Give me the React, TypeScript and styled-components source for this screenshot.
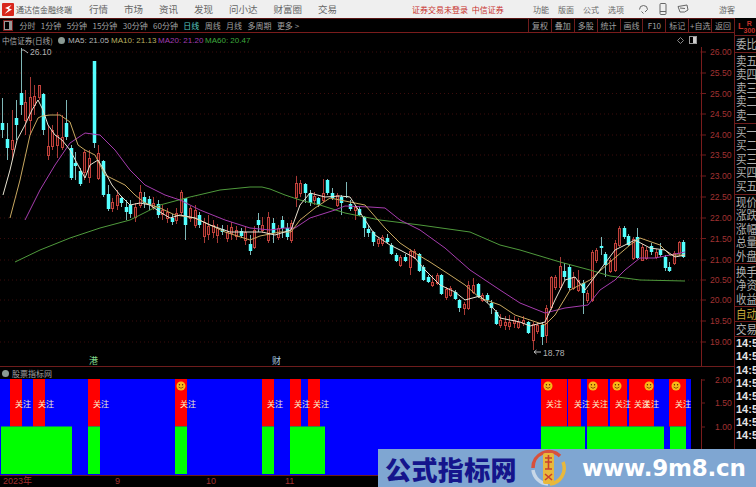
import React from 'react';
import styled, { createGlobalStyle } from 'styled-components';

const CN = '"Noto Sans CJK SC", "Noto Sans", sans-serif';
const LATIN = '"Liberation Sans", "Noto Sans CJK SC", sans-serif';

const GlobalStyle = createGlobalStyle`
  html, body {
    margin: 0;
    padding: 0;
    background: #000;
  }
  #root {
    width: 756px;
    height: 487px;
  }
`;

const Screen = styled.div`
  position: relative;
  display: flex;
  flex-direction: column;
  width: 756px;
  height: 487px;
  overflow: hidden;
  background: #000;
  font-family: ${CN};
`;

const TopBar = styled.div`
  display: flex;
  align-items: center;
  flex: 0 0 18px;
  padding-left: 2px;
  background: #efefef;
  color: #666;
  font-size: 9.5px;
  white-space: nowrap;
`;

const Brand = styled.span`
  margin-left: 2px;
  width: 73px;
  font-size: 8px;
  color: #555;
`;

const Menu = styled.div<{ $gap: number; $left?: number; $size?: number }>`
  display: flex;
  align-items: center;
  gap: ${({ $gap }) => $gap}px;
  margin-left: ${({ $left }) => $left ?? 0}px;
  font-size: ${({ $size }) => $size ?? 9.5}px;
`;

const Notice = styled.span`
  margin-left: 75px;
  width: 121px;
  font-size: 8px;
  color: #c8302c;
`;

const IconButton = styled.span<{ $width: number }>`
  display: flex;
  justify-content: center;
  width: ${({ $width }) => $width}px;
  color: #666;
`;

const Guest = styled.span`
  margin-left: 26px;
  font-size: 8px;
`;

const Body = styled.div`
  display: flex;
  flex: 1;
  min-height: 0;
`;

const LeftColumn = styled.div`
  display: flex;
  flex-direction: column;
  flex: 0 0 734px;
  border-right: 1px solid #6e1c1c;
`;

const Toolbar = styled.div`
  display: flex;
  align-items: center;
  justify-content: space-between;
  flex: 0 0 15px;
  box-sizing: border-box;
  border-top: 1px solid #5a1414;
  border-bottom: 1px solid #7a1c1c;
  font-size: 8px;
  color: #a0a0a0;
  white-space: nowrap;
`;

const Periods = styled.div`
  display: flex;
  align-items: center;
  gap: 5.4px;
  padding-left: 4px;
`;

const LayoutToggle = styled.span`
  width: 4px;
  height: 7px;
  margin-right: 2px;
  border: 1px solid #999;
  outline: 1px solid #7a1c1c;
  border-right-width: 3px;
`;

const Period = styled.span<{ $active?: boolean }>`
  color: ${({ $active }) => ($active ? '#58c8c0' : '#a0a0a0')};
`;

const ToolCells = styled.div`
  display: flex;
  height: 100%;
`;

const ToolCell = styled.span`
  display: flex;
  align-items: center;
  justify-content: center;
  width: 22.9px;
  border-left: 1px solid #6e1c1c;
  box-sizing: border-box;
`;

const InfoRow = styled.div`
  display: flex;
  align-items: center;
  flex: 0 0 14px;
  padding-left: 2px;
  font-size: 8px;
  color: #a8a8a8;
  white-space: nowrap;
  font-family: ${LATIN};
`;

const StockName = styled.span`
  width: 56px;
  font-family: ${CN};
  font-size: 7.6px;
`;

const Dot = styled.span`
  width: 7px;
  height: 7px;
  margin-right: 3px;
  border-radius: 50%;
  background: #8a9a94;
`;

const MaLabel = styled.span<{ $color: string; $width: number }>`
  width: ${({ $width }) => $width}px;
  color: ${({ $color }) => $color};
`;

const ViewControls = styled.span`
  display: flex;
  align-items: center;
  gap: 5px;
  margin-left: auto;
  margin-right: 37px;
`;

const ChartSvg = styled.svg`
  display: block;
  flex-shrink: 0;
  overflow: visible;
`;

const IndicatorTitle = styled.div`
  display: flex;
  align-items: center;
  flex: 0 0 13px;
  padding-left: 2px;
  box-sizing: border-box;
  border-top: 1px solid #6e1c1c;
  font-size: 8px;
  color: #a0a0a0;
  white-space: nowrap;
`;

const DateAxis = styled.div`
  display: flex;
  flex: 1;
  border-top: 1px solid #6e1c1c;
  font-family: ${LATIN};
`;

const DateLabel = styled.span<{ $width: number }>`
  width: ${({ $width }) => $width}px;
  padding-left: 3px;
  box-sizing: border-box;
  font-size: 9px;
  line-height: 11px;
  color: #a03030;
`;

const Sidebar = styled.div`
  display: flex;
  flex-direction: column;
  flex: 1;
  min-width: 0;
  overflow: hidden;
  color: #b0b0b0;
  font-size: 10.5px;
  white-space: nowrap;
`;

const SideHeader = styled.div`
  display: flex;
  align-items: flex-start;
  justify-content: space-between;
  flex: 0 0 15px;
  padding: 2px 1px 0 3px;
  border-bottom: 1px solid #6e1c1c;
  font-family: ${LATIN};
  font-weight: 700;
  color: #c03028;
`;

const HeaderLetter = styled.span`
  font-size: 9px;
  line-height: 12px;
`;

const HeaderRatio = styled.span`
  display: flex;
  flex-direction: column;
  align-items: center;
  font-size: 7px;
  line-height: 7px;
`;

const SideGroup = styled.div<{ $rows: number; $rowHeight?: number; $pad?: number }>`
  flex: 0 0 auto;
  display: grid;
  grid-auto-rows: ${({ $rowHeight }) => $rowHeight ?? 13.6}px;
  padding: ${({ $pad }) => $pad ?? 1}px 0;
  border-bottom: 1px solid #6e1c1c;
  height: ${({ $rows, $rowHeight }) => $rows * ($rowHeight ?? 13.6)}px;
`;

const SideRow = styled.span<{ $tone?: string }>`
  display: block;
  padding-left: 1px;
  line-height: 13px;
  transform: scaleY(1.15);
  color: ${({ $tone }) => $tone ?? '#b0b0b0'};
`;

const TimeRow = styled.span`
  display: block;
  height: 13.1px;
  flex-shrink: 0;
  padding-left: 1px;
  font-family: ${LATIN};
  font-size: 11px;
  font-weight: 700;
  line-height: 13px;
  color: #e4e4e4;
`;

const Watermark = styled.div`
  position: absolute;
  left: 378px;
  top: 449px;
  display: flex;
  align-items: center;
  width: 378px;
  height: 38px;
  background: #7fa6d2;
  white-space: nowrap;
`;

const WatermarkTitle = styled.span`
  margin-left: 7px;
  width: 145px;
  font-size: 26px;
  font-weight: 900;
  letter-spacing: 0.4px;
  color: #15158c;
`;

const WatermarkUrl = styled.span`
  margin-left: 14px;
  font-family: "DejaVu Sans", sans-serif;
  font-size: 23px;
  font-weight: 700;
  letter-spacing: -0.2px;
  color: #fff;
`;

// x, body top, body bottom, high, low, colour (r = up, c = down)
type Candle = [number, number, number, number, number, 'r' | 'c'];

const CANDLES: Candle[] = [
  [2, 123, 130, 98, 138, 'c'], [7, 139, 148, 123, 160, 'c'], [12, 140, 149, 110, 160, 'r'], [16, 118, 125, 100, 140, 'c'],
  [21, 93, 105, 48, 115, 'c'], [25, 102, 120, 90, 135, 'r'], [30, 97, 120, 77, 135, 'r'], [34, 96, 105, 85, 115, 'r'],
  [39, 85, 97, 85, 100, 'r'], [43, 94, 130, 93, 135, 'c'], [48, 146, 155, 125, 160, 'r'], [52, 130, 146, 125, 150, 'r'],
  [57, 135, 145, 112, 158, 'r'], [62, 137, 147, 115, 150, 'r'], [66, 123, 137, 100, 140, 'c'], [71, 148, 178, 145, 180, 'c'],
  [75, 163, 166, 152, 180, 'c'], [80, 171, 184, 168, 186, 'c'], [84, 152, 172, 150, 180, 'r'], [89, 158, 177, 150, 183, 'r'],
  [94, 61, 143, 61, 148, 'c'], [98, 153, 178, 145, 180, 'r'], [103, 161, 195, 160, 197, 'c'], [108, 194, 209, 185, 211, 'c'],
  [112, 202, 208, 198, 212, 'r'], [117, 195, 205, 190, 210, 'r'], [121, 198, 203, 196, 207, 'c'], [126, 207, 212, 200, 220, 'c'],
  [130, 205, 214, 200, 218, 'c'], [135, 207, 217, 203, 222, 'r'], [140, 192, 205, 185, 208, 'r'], [144, 197, 203, 192, 208, 'c'],
  [149, 199, 205, 196, 210, 'c'], [153, 203, 207, 197, 210, 'r'], [158, 204, 215, 200, 218, 'c'], [162, 210, 214, 205, 220, 'r'],
  [167, 212, 218, 208, 223, 'r'], [172, 218, 222, 214, 225, 'c'], [176, 213, 220, 208, 224, 'r'], [181, 192, 212, 190, 215, 'r'],
  [185, 198, 225, 198, 240, 'c'], [190, 208, 218, 206, 222, 'r'], [195, 210, 225, 205, 228, 'r'], [199, 215, 225, 212, 228, 'c'],
  [204, 222, 236, 218, 243, 'r'], [208, 226, 234, 215, 240, 'r'], [213, 225, 232, 220, 238, 'r'], [217, 228, 235, 224, 243, 'r'],
  [222, 229, 232, 225, 235, 'c'], [227, 232, 238, 225, 242, 'r'], [231, 227, 233, 222, 240, 'r'], [236, 230, 236, 226, 240, 'r'],
  [241, 231, 236, 228, 238, 'c'], [245, 232, 240, 226, 245, 'r'], [250, 244, 251, 235, 255, 'c'], [254, 230, 247, 226, 249, 'r'],
  [258, 220, 225, 213, 232, 'c'], [262, 225, 230, 217, 233, 'r'], [268, 217, 240, 212, 243, 'r'], [273, 223, 233, 218, 243, 'c'],
  [278, 228, 237, 225, 240, 'r'], [282, 220, 228, 216, 238, 'c'], [287, 228, 237, 223, 240, 'c'], [291, 223, 240, 220, 243, 'r'],
  [296, 183, 197, 176, 207, 'r'], [300, 183, 193, 180, 197, 'r'], [305, 184, 193, 183, 203, 'c'], [310, 193, 203, 190, 206, 'c'],
  [314, 196, 200, 192, 205, 'r'], [318, 198, 205, 197, 207, 'c'], [323, 193, 200, 179, 202, 'r'], [327, 180, 193, 179, 195, 'c'],
  [332, 193, 198, 188, 200, 'c'], [337, 195, 205, 193, 207, 'r'], [341, 197, 203, 195, 215, 'c'], [346, 196, 197, 182, 198, 'c'],
  [350, 204, 209, 200, 211, 'c'], [355, 207, 210, 206, 220, 'r'], [359, 209, 215, 207, 216, 'c'], [364, 217, 228, 216, 237, 'c'],
  [368, 229, 233, 225, 237, 'c'], [373, 232, 242, 231, 246, 'c'], [378, 239, 243, 237, 247, 'r'], [382, 237, 243, 235, 246, 'r'],
  [387, 238, 242, 234, 244, 'c'], [391, 245, 254, 243, 255, 'c'], [396, 255, 261, 253, 262, 'c'], [400, 257, 265, 255, 267, 'r'],
  [405, 257, 261, 254, 262, 'c'], [410, 251, 267, 249, 275, 'r'], [414, 251, 257, 249, 259, 'r'], [419, 254, 271, 253, 272, 'c'],
  [423, 267, 280, 265, 281, 'c'], [428, 277, 282, 275, 283, 'c'], [432, 282, 285, 275, 287, 'r'], [437, 275, 283, 273, 285, 'r'],
  [441, 275, 294, 274, 295, 'c'], [446, 289, 297, 287, 300, 'r'], [450, 288, 295, 286, 297, 'r'], [455, 292, 299, 290, 300, 'c'],
  [459, 300, 308, 299, 312, 'c'], [464, 304, 308, 302, 315, 'r'], [468, 285, 308, 281, 310, 'r'], [473, 285, 292, 278, 294, 'r'],
  [478, 284, 297, 283, 298, 'c'], [482, 295, 300, 293, 302, 'r'], [487, 295, 300, 293, 303, 'c'], [491, 303, 308, 300, 314, 'c'],
  [496, 312, 324, 310, 325, 'c'], [500, 320, 325, 314, 328, 'r'], [505, 322, 325, 316, 330, 'r'], [509, 322, 326, 315, 330, 'r'],
  [514, 320, 323, 316, 328, 'r'], [518, 322, 327, 318, 329, 'r'], [523, 320, 323, 316, 326, 'r'], [528, 322, 333, 321, 334, 'c'],
  [533, 324, 340, 322, 350, 'r'], [537, 325, 331, 322, 334, 'r'], [542, 325, 337, 322, 345, 'c'], [546, 308, 335, 305, 343, 'r'],
  [551, 277, 307, 276, 310, 'r'], [555, 277, 287, 275, 290, 'r'], [560, 266, 287, 257, 290, 'r'], [564, 271, 277, 263, 280, 'c'],
  [569, 267, 288, 265, 290, 'c'], [573, 277, 288, 272, 290, 'r'], [578, 280, 290, 270, 292, 'r'], [583, 283, 293, 280, 314, 'c'],
  [587, 293, 300, 290, 303, 'r'], [592, 252, 300, 250, 302, 'r'], [596, 250, 260, 248, 263, 'r'], [601, 246, 248, 237, 255, 'c'],
  [605, 254, 265, 252, 277, 'c'], [610, 260, 271, 258, 273, 'r'], [615, 243, 270, 240, 272, 'r'], [619, 228, 245, 226, 247, 'r'],
  [624, 228, 237, 226, 239, 'c'], [628, 236, 245, 234, 246, 'c'], [633, 239, 258, 237, 260, 'r'], [637, 237, 258, 228, 259, 'c'],
  [642, 247, 260, 244, 261, 'r'], [646, 250, 258, 247, 260, 'r'], [651, 246, 252, 243, 255, 'c'], [656, 252, 257, 249, 259, 'r'],
  [660, 250, 255, 243, 257, 'c'], [665, 257, 268, 255, 271, 'c'], [669, 267, 271, 262, 272, 'c'], [674, 253, 263, 251, 265, 'r'],
  [679, 242, 253, 241, 256, 'r'], [683, 242, 257, 240, 258, 'c'],
];

const MA_LINES: { color: string; points: string }[] = [
  {
    color: '#4f9a3c',
    points:
      '15,262 40,250 70,238 100,228 130,220 160,205 190,197 220,190 250,187 262,187 270,189 285,195 300,200 320,205 345,213 380,220 420,225 470,232 500,245 520,250 560,262 590,270 610,276 640,280 685,281',
  },
  {
    color: '#a63cae',
    points:
      '25,220 40,190 55,165 70,143 85,133 100,135 115,150 130,170 145,185 165,195 180,200 200,210 225,220 250,228 270,230 285,228 295,228 310,218 335,210 345,206 370,207 385,208 400,220 420,230 445,248 470,270 500,290 520,303 545,313 565,308 588,305 600,290 615,280 625,270 640,258 655,258 670,255 685,252',
  },
  {
    color: '#c8a860',
    points:
      '10,218 20,180 30,135 38,118 42,116 50,115 60,115 70,122 78,145 85,150 95,155 105,175 115,180 125,185 135,195 145,203 160,208 175,215 195,218 225,232 250,240 260,236 280,232 291,232 300,220 315,208 330,198 350,202 365,205 385,228 400,243 415,253 430,262 450,275 465,285 480,298 500,305 515,315 530,320 545,325 555,315 570,290 590,280 610,262 630,245 640,238 660,245 670,255 685,255',
  },
  {
    color: '#e8e2d0',
    points:
      '3,195 10,170 17,140 25,125 32,110 38,100 43,110 48,125 55,135 62,140 70,150 78,165 85,178 90,165 98,160 104,170 112,185 120,195 130,205 140,203 150,205 160,212 170,218 180,215 195,218 210,225 230,232 250,232 262,232 275,235 291,230 300,205 310,193 325,197 340,196 350,197 365,220 375,235 390,245 400,250 415,258 425,270 440,285 455,292 465,300 480,296 495,310 500,318 520,322 530,326 545,322 555,300 565,280 575,277 585,290 600,270 615,250 635,240 650,248 665,250 675,257 685,255',
  },
];

const PRICE_TICKS: [string, number][] = [
  ['26.00', 52], ['25.50', 73], ['25.00', 93.5], ['24.50', 114], ['24.00', 135], ['23.50', 155], ['23.00', 176], ['22.50', 197],
  ['22.00', 218], ['21.50', 238.5], ['21.00', 260], ['20.50', 280], ['20.00', 300], ['19.50', 321], ['19.00', 342],
];

const INDICATOR_TICKS: [string, number][] = [['2.00', 381], ['1.50', 404], ['1.00', 428]];

const ATTENTION_BARS: [number, number][] = [
  [10, 12], [33, 12], [88, 12], [175, 12], [262, 12], [290, 11], [308, 12],
  [541, 26], [568, 13], [587, 21], [610, 17], [629, 25], [669, 17],
];

const VOLUME_BARS: [number, number][] = [
  [1, 71], [88, 12], [175, 12], [262, 12], [290, 35], [541, 44], [587, 77], [670, 16],
];

const ATTENTION_LABELS = [23, 46, 101, 188, 275, 302, 321, 554, 582, 600, 623, 642, 651, 683];
const SMILES = [181, 548, 593, 617, 649, 676];

const SIDE_GROUPS: { rows: string[]; pad?: number }[] = [
  { rows: ['委比'] },
  { rows: ['卖五', '卖四', '卖三', '卖二', '卖一'] },
  { rows: ['买一', '买二', '买三', '买四', '买五'] },
  { rows: ['现价', '涨跌', '涨幅', '总量', '外盘'], pad: 0 },
  { rows: ['换手', '净资', '收益'] },
];

const PERIODS = ['分时', '1分钟', '5分钟', '15分钟', '30分钟', '60分钟', '日线', '周线', '月线', '多周期', '更多 >'];
const TOOLS = ['复权', '叠加', '多股', '统计', '画线', 'F10', '标记', '+自选', '返回'];

const PriceChart = () => (
  <ChartSvg width={734} height={319} viewBox="0 47 734 319">
    {PRICE_TICKS.map(([label, y]) => (
      <g key={label}>
        <line x1={0} x2={701} y1={y} y2={y} stroke="#3c0c0c" strokeDasharray="1 3" />
        <line x1={701} x2={706} y1={y} y2={y} stroke="#6e1c1c" />
        <text x={710} y={y + 3} fontFamily={LATIN} fontSize={8.6} fill="#a03232">
          {label}
        </text>
      </g>
    ))}
    <line x1={701.5} x2={701.5} y1={47} y2={366} stroke="#7a1c1c" />
    {CANDLES.map(([x, top, bottom, high, low, kind]) => (
      <g key={x}>
        <line
          x1={x + 0.5}
          x2={x + 0.5}
          y1={high}
          y2={low}
          stroke={kind === 'r' ? '#a83a36' : '#7fb8b8'}
        />
        {kind === 'r' ? (
          <rect x={x - 0.5} y={top + 0.5} width={2} height={bottom - top} fill="#2c0806" stroke="#c2423c" />
        ) : (
          <rect x={x - 1.25} y={top} width={3.5} height={bottom - top} fill="#54ffff" />
        )}
      </g>
    ))}
    {MA_LINES.map(line => (
      <polyline key={line.color} points={line.points} fill="none" stroke={line.color} strokeWidth={1} />
    ))}
    <path d="M21 50 L24 50 L28 53" fill="none" stroke="#bbb" />
    <text x={30} y={55} fontFamily={LATIN} fontSize={8.6} fill="#b0b0b0">
      26.10
    </text>
    <path d="M534 352 H541 M534 352 l2.5 -2 M534 352 l2.5 2" fill="none" stroke="#bbb" />
    <text x={543} y={355.5} fontFamily={LATIN} fontSize={8.6} fill="#b0b0b0">
      18.78
    </text>
    <text x={89} y={364} fontFamily={CN} fontSize={9} fill="#7fd88a">
      港
    </text>
    <text x={272} y={364} fontFamily={CN} fontSize={9} fill="#a8c8e0">
      财
    </text>
  </ChartSvg>
);

const Smile = ({ x }: { x: number }) => (
  <g transform={`translate(${x} 387)`}>
    <circle r={4.5} fill="#f8b818" />
    <circle cx={-1.6} cy={-1.2} r={0.7} fill="#5a2a00" />
    <circle cx={1.6} cy={-1.2} r={0.7} fill="#5a2a00" />
    <path d="M-2.4 1 Q0 3.6 2.4 1" fill="none" stroke="#7a3a00" strokeWidth={0.8} />
  </g>
);

const IndicatorChart = () => (
  <ChartSvg width={734} height={96} viewBox="0 380 734 96">
    <rect x={0} y={380} width={691} height={96} fill="#0000ff" />
    {ATTENTION_BARS.map(([x, w]) => (
      <rect key={x} x={x} y={380} width={w} height={47.5} fill="#ff0000" />
    ))}
    {VOLUME_BARS.map(([x, w]) => (
      <rect key={x} x={x} y={427.5} width={w} height={47.5} fill="#00ff00" />
    ))}
    {ATTENTION_LABELS.map(x => (
      <text key={x} x={x} y={407.5} textAnchor="middle" fontFamily={CN} fontSize={8} fill="#f8ecc8">
        关注
      </text>
    ))}
    {SMILES.map(x => (
      <Smile key={x} x={x} />
    ))}
    <line x1={701.5} x2={701.5} y1={380} y2={476} stroke="#7a1c1c" />
    {INDICATOR_TICKS.map(([label, y]) => (
      <g key={label}>
        <line x1={701} x2={705} y1={y} y2={y} stroke="#6e1c1c" />
        <text x={715} y={y + 3} fontFamily={LATIN} fontSize={8.6} fill="#a03232">
          {label}
        </text>
      </g>
    ))}
  </ChartSvg>
);

const WatermarkLogo = () => (
  <svg width={38} height={38} viewBox="0 0 38 38" style={{ flexShrink: 0 }}>
    <path d="M3 19 A16 16 0 0 1 30 7" fill="none" stroke="#d8503c" strokeWidth={3.5} />
    <path d="M3 21 A16 16 0 0 0 18 35" fill="none" stroke="#c8d8e8" strokeWidth={3.5} />
    <path d="M33 13 A16 16 0 0 1 20 35" fill="none" stroke="#e8b83c" strokeWidth={3.5} />
    <rect x={13} y={4} width={11} height={31} rx={2} fill="#e8b83c" />
    <path d="M15 9 H22 M15 13 H22 M18.5 6 V20 M15 20 H22 M15 25 L22 31 M22 25 L15 31" stroke="#c8402c" strokeWidth={1.6} />
  </svg>
);

export default function App() {
  return (
    <Screen>
      <GlobalStyle />
      <TopBar>
        <svg width={12} height={13} viewBox="0 0 12 13">
          <rect width={12} height={13} rx={1} fill="#d8261c" />
          <path d="M9.5 2 L3 5 L6.5 6.5 L2.5 11 L10 6.5 L6.8 5.2 Z" fill="#fff" />
        </svg>
        <Brand>通达信金融终端</Brand>
        <Menu $gap={16}>
          <span>行情</span>
          <span>市场</span>
          <span>资讯</span>
          <span>发现</span>
          <span>问小达</span>
          <span>财富圈</span>
          <span>交易</span>
        </Menu>
        <Notice>证券交易未登录&nbsp;&nbsp;中信证券</Notice>
        <Menu $gap={9} $size={8}>
          <span>功能</span>
          <span>版面</span>
          <span>公式</span>
          <span>选项</span>
        </Menu>
        <Menu $gap={0} $left={9}>
          <IconButton $width={20}>
            <svg width={11} height={11} viewBox="0 0 11 11" fill="none" stroke="currentColor">
              <path d="M1.5 5.5 A4 4 0 0 1 9.5 5.5 L7 8 M5.5 9.5 L3.5 7.5" />
            </svg>
          </IconButton>
          <IconButton $width={20}>
            <svg width={8} height={12} viewBox="0 0 8 12" fill="none" stroke="currentColor">
              <rect x={1} y={0.5} width={6} height={11} rx={1} />
              <path d="M1 8.5 H7" />
            </svg>
          </IconButton>
          <IconButton $width={20}>
            <svg width={12} height={10} viewBox="0 0 12 10" fill="none" stroke="currentColor">
              <path d="M1 2.5 L10 1 L11 6 Q8 9 3 8 Z M3 4 L8 4.5" />
            </svg>
          </IconButton>
        </Menu>
        <Guest>游客</Guest>
      </TopBar>
      <Body>
        <LeftColumn>
          <Toolbar>
            <Periods>
              <LayoutToggle />
              {PERIODS.map(label => (
                <Period key={label} $active={label === '日线'}>
                  {label}
                </Period>
              ))}
            </Periods>
            <ToolCells>
              {TOOLS.map(label => (
                <ToolCell key={label}>{label}</ToolCell>
              ))}
            </ToolCells>
          </Toolbar>
          <InfoRow>
            <StockName>中信证券(日线)</StockName>
            <Dot />
            <MaLabel $color="#b4b4b4" $width={43}>MA5: 21.05</MaLabel>
            <MaLabel $color="#b8b060" $width={47}>MA10: 21.13</MaLabel>
            <MaLabel $color="#a03cb0" $width={47}>MA20: 21.20</MaLabel>
            <MaLabel $color="#3ea83e" $width={50}>MA60: 20.47</MaLabel>
            <ViewControls>
              <svg width={7} height={7} viewBox="0 0 7 7" fill="none" stroke="#888">
                <path d="M3.5 0.5 L6.5 3.5 L3.5 6.5 L0.5 3.5 Z" />
              </svg>
              <svg width={8} height={8} viewBox="0 0 8 8">
                <rect x={0.5} y={0.5} width={7} height={7} fill="none" stroke="#999" />
                <rect x={4} y={1} width={3} height={6} fill="#ccc" />
              </svg>
            </ViewControls>
          </InfoRow>
          <PriceChart />
          <IndicatorTitle>
            <Dot />
            股票指标网
          </IndicatorTitle>
          <IndicatorChart />
          <DateAxis>
            <DateLabel $width={112}>2023年</DateLabel>
            <DateLabel $width={91}>9</DateLabel>
            <DateLabel $width={79}>10</DateLabel>
            <DateLabel $width={60}>11</DateLabel>
          </DateAxis>
        </LeftColumn>
        <Sidebar>
          <SideHeader>
            <HeaderLetter>L</HeaderLetter>
            <HeaderRatio>
              R
              <span>300</span>
            </HeaderRatio>
          </SideHeader>
          {SIDE_GROUPS.map(group => (
            <SideGroup key={group.rows[0]} $rows={group.rows.length} $pad={group.pad}>
              {group.rows.map(label => (
                <SideRow key={label}>{label}</SideRow>
              ))}
            </SideGroup>
          ))}
          <SideGroup $rows={1} $rowHeight={14} $pad={0}>
            <SideRow $tone="#c8a838">自动</SideRow>
          </SideGroup>
          <SideGroup $rows={1} $rowHeight={14} $pad={0}>
            <SideRow>交易</SideRow>
          </SideGroup>
          {Array.from({ length: 8 }, (_, i) => (
            <TimeRow key={i}>14:50</TimeRow>
          ))}
        </Sidebar>
      </Body>
      <Watermark>
        <WatermarkTitle>公式指标网</WatermarkTitle>
        <WatermarkLogo />
        <WatermarkUrl>www.9m8.cn</WatermarkUrl>
      </Watermark>
    </Screen>
  );
}
